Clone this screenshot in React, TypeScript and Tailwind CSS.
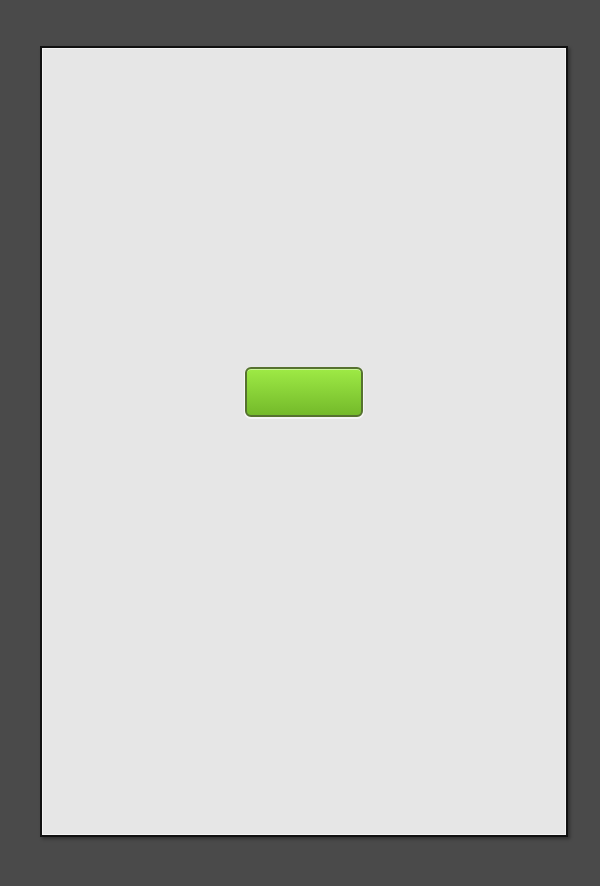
export default function App() {
  return (
    <div className="w-[600px] h-[886px] bg-[#4a4a4a] pt-[46px] pl-[40px] overflow-hidden">
      <div className="w-[528px] h-[791px] border-2 border-[#111111] bg-[#e6e6e6] shadow-[2px_2px_3px_rgba(0,0,0,0.35)] flex flex-col items-center">
        <div className="w-full h-full border border-[#f4f4f4] flex flex-col items-center pt-[318px] pr-[1px]">
          <div className="w-[118px] h-[50px] rounded-[6px] border-2 border-[#56722f] bg-gradient-to-b from-[#9eea45] to-[#74ba2a] shadow-[inset_0_1px_0_rgba(255,255,255,0.45),0_1px_0_1px_rgba(255,255,255,0.6)]" />
        </div>
      </div>
    </div>
  );
}
